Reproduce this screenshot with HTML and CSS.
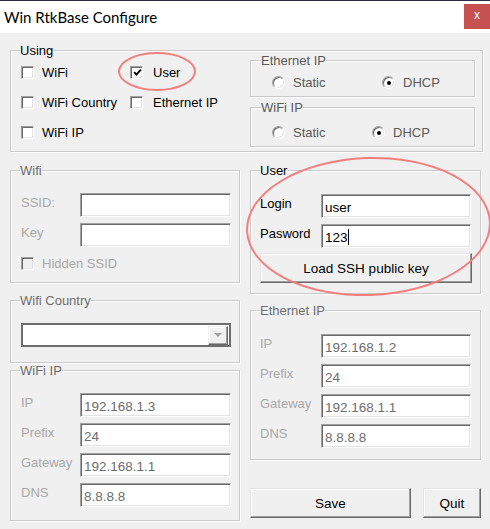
FILE: index.html
```html
<!DOCTYPE html>
<html lang="en">
<head>
<meta charset="utf-8">
<title>Win RtkBase Configure</title>
<link rel="stylesheet" href="styles.css">
</head>
<body>
<div class="window">
  <div class="titlebar">
    <span class="title">Win RtkBase Configure</span>
    <span class="close">x</span>
  </div>

  <div class="client">
    <fieldset class="group using">
      <legend>Using</legend>
      <div class="using-body">
        <div class="checks">
          <label class="chk"><span class="box"></span>WiFi</label>
          <label class="chk col2"><span class="box"><svg class="tick" viewBox="0 0 9 9"><polyline points="1.2,4 3.4,6.6 7.8,1.6"/></svg></span>User</label>
          <label class="chk"><span class="box"></span>WiFi Country</label>
          <label class="chk col2"><span class="box"></span>Ethernet IP</label>
          <label class="chk"><span class="box"></span>WiFi IP</label>
        </div>
        <div class="modes">
          <fieldset class="group sub eth-mode">
            <legend>Ethernet IP</legend>
            <div class="radios wide">
              <span class="rad"><span class="radio"></span>Static</span>
              <span class="rad"><span class="radio on"></span>DHCP</span>
            </div>
          </fieldset>
          <fieldset class="group sub wifi-mode">
            <legend>WiFi IP</legend>
            <div class="radios narrow">
              <span class="rad"><span class="radio"></span>Static</span>
              <span class="rad"><span class="radio on"></span>DHCP</span>
            </div>
          </fieldset>
        </div>
      </div>
    </fieldset>

    <div class="columns">
      <div class="col col-left">
        <fieldset class="group off wifi">
          <legend>Wifi</legend>
          <div class="form left-form">
            <span class="lbl">SSID:</span><div class="field"></div>
            <span class="lbl">Key</span><div class="field"></div>
            <label class="chk hidden-ssid"><span class="box dis"></span>Hidden SSID</label>
          </div>
        </fieldset>

        <fieldset class="group off country">
          <legend>Wifi Country</legend>
          <div class="combo-wrap">
            <div class="combo"><span class="drop"><span class="arrow"></span></span></div>
          </div>
        </fieldset>

        <fieldset class="group off wifi-ip">
          <legend>WiFi IP</legend>
          <div class="form left-form ipform">
            <span class="lbl">IP</span><div class="field">192.168.1.3</div>
            <span class="lbl">Prefix</span><div class="field">24</div>
            <span class="lbl">Gateway</span><div class="field">192.168.1.1</div>
            <span class="lbl">DNS</span><div class="field">8.8.8.8</div>
          </div>
        </fieldset>
      </div>

      <div class="col col-right">
        <fieldset class="group user">
          <legend>User</legend>
          <div class="form right-form">
            <span class="lbl">Login</span><div class="field on">user</div>
            <span class="lbl">Pasword</span><div class="field on">123<span class="caret"></span></div>
            <button class="btn ssh" type="button">Load SSH public key</button>
          </div>
        </fieldset>

        <fieldset class="group off eth-ip">
          <legend>Ethernet IP</legend>
          <div class="form right-form ipform">
            <span class="lbl">IP</span><div class="field">192.168.1.2</div>
            <span class="lbl">Prefix</span><div class="field">24</div>
            <span class="lbl">Gateway</span><div class="field">192.168.1.1</div>
            <span class="lbl">DNS</span><div class="field">8.8.8.8</div>
          </div>
        </fieldset>

        <div class="actions">
          <button class="btn save" type="button">Save</button>
          <button class="btn quit" type="button">Quit</button>
        </div>
      </div>
    </div>
  </div>

  <div class="annot annot-user"></div>
  <div class="annot annot-group"></div>
</div>
</body>
</html>
```

FILE: styles.css
```css
* { box-sizing: border-box; }

html, body {
  margin: 0;
  padding: 0;
}

body {
  width: 490px;
  height: 529px;
  overflow: hidden;
  background: #f0f0f0;
  font-family: "Liberation Sans", Arial, sans-serif;
  font-size: 13px;
  line-height: 15px;
  color: #000;
}

.window {
  position: relative;
  height: 529px;
  border-top: 1px solid #2a2a44;
}

/* ---------- title bar ---------- */
.titlebar {
  height: 32px;
  background: #fff;
  display: flex;
  justify-content: space-between;
  align-items: flex-start;
}

.title {
  font-family: Lato, "Liberation Sans", sans-serif;
  font-size: 15px;
  line-height: 17px;
  margin: 8px 0 0 4px;
  color: #000;
}

.close {
  width: 26px;
  height: 25px;
  margin-top: 3px;
  background: #c75050;
  color: #fff;
  font-size: 12px;
  line-height: 23px;
  text-align: center;
}

/* ---------- client area ---------- */
.client {
  padding-left: 10px;
}

.group {
  margin: 0;
  padding: 0;
  min-width: 0;
  border: 1px solid #c9c9c9;
  box-shadow: inset 1px 1px 0 #fff, 1px 1px 0 #fff;
}

.group > legend {
  padding: 0;
  margin-left: 9px;
  font-size: 13px;
  line-height: 15px;
}

.off > legend { color: #6d6d6d; }
.off .lbl { color: #a8a8a8; }
.off .field { color: #6d6d6d; }

.using {
  width: 473px;
  margin-top: 10px;
}

.using-body {
  display: flex;
  padding: 4px 7px 4px 10px;
}

.checks {
  width: 229px;
  display: grid;
  grid-template-columns: 109px 1fr;
  grid-template-rows: repeat(3, 20px);
  row-gap: 10px;
  align-self: flex-start;
}

.chk {
  display: flex;
  align-items: center;
  gap: 8px;
}

.chk.col2 { gap: 10px; }

.box {
  width: 13px;
  height: 13px;
  flex: none;
  background: #fff;
  border: 1px solid;
  border-color: #a0a0a0 #fff #fff #a0a0a0;
  box-shadow: inset 1px 1px 0 #696969, inset -1px -1px 0 #e3e3e3;
  display: flex;
  align-items: center;
  justify-content: center;
}

.box.dis { background: #f0f0f0; }

.tick {
  width: 9px;
  height: 9px;
  fill: none;
  stroke: #000;
  stroke-width: 1.9;
  margin: 1px 0 0 1px;
}

.modes {
  width: 225px;
  margin-top: -9px;
  display: flex;
  flex-direction: column;
  gap: 3px;
}

.sub > legend {
  margin-left: 10px;
  color: #5a5a5a;
}

.radios {
  display: grid;
  padding: 7px 0 7px 21px;
  color: #5a5a5a;
}

.radios.wide { grid-template-columns: 110px 1fr; }
.radios.narrow { grid-template-columns: 100px 1fr; }
.wifi-mode .radios { padding-top: 10px; }

.rad {
  display: flex;
  align-items: center;
  gap: 8px;
  height: 14px;
}

.radio {
  width: 13px;
  height: 13px;
  flex: none;
  border-radius: 50%;
  background: #fff;
  border: 1px solid;
  border-color: #a0a0a0 #fff #fff #a0a0a0;
  box-shadow: inset 1px 1px 0 #696969, inset -1px -1px 0 #e3e3e3;
  display: flex;
  align-items: center;
  justify-content: center;
}

.radio.on::after {
  content: "";
  width: 4px;
  height: 4px;
  border-radius: 50%;
  background: #000;
  margin: 1px 0 0 1px;
}

/* ---------- lower columns ---------- */
.columns {
  display: flex;
  gap: 10px;
  margin-top: 11px;
}

.col {
  display: flex;
  flex-direction: column;
}

.col-left { width: 230px; }
.col-right { width: 231px; }

.form {
  display: grid;
  row-gap: 6px;
}

.left-form {
  grid-template-columns: 59px 151px;
  padding: 15px 8px 12px 10px;
}

.ipform.left-form { padding-bottom: 13px; }

.right-form {
  grid-template-columns: 61px 151px;
  padding: 16px 8px 10px 9px;
}

.ipform.right-form { padding-bottom: 11px; }

.lbl {
  padding-top: 2px;
  white-space: nowrap;
}

.field {
  height: 24px;
  width: 100%;
  background: #fff;
  border: 1px solid;
  border-color: #a0a0a0 #fff #fff #a0a0a0;
  box-shadow: inset 1px 1px 0 #696969, inset -1px -1px 0 #e3e3e3;
  font-size: 13.5px;
  line-height: 16px;
  padding: 5px 3px 0 3px;
  white-space: nowrap;
  overflow: hidden;
}

.right-form .field { width: 150px; }
.field.on { color: #000; }

.caret {
  display: inline-block;
  width: 1px;
  height: 16px;
  background: #000;
  vertical-align: top;
  margin-top: -1px;
}

.hidden-ssid {
  grid-column: 1 / -1;
  height: 14px;
  margin-top: 3px;
  color: #a8a8a8;
}

.country { margin-top: 10px; }

.combo-wrap {
  padding: 15px 8px 15px 10px;
}

.combo {
  height: 24px;
  background: #fff;
  border: 2px solid #6d6d6d;
  display: flex;
  justify-content: flex-end;
  align-items: center;
  padding-right: 1px;
}

.drop {
  width: 20px;
  height: 19px;
  background: #f0f0f0;
  border: 1px solid;
  border-color: #f0f0f0 #696969 #696969 #f0f0f0;
  box-shadow: inset -1px -1px 0 #a0a0a0, inset 1px 1px 0 #fff;
  display: flex;
  align-items: center;
  justify-content: center;
}

.arrow {
  width: 0;
  height: 0;
  border-left: 4px solid transparent;
  border-right: 4px solid transparent;
  border-top: 4px solid #a0a0a0;
}

.user > legend { color: #000; }
.eth-ip { margin-top: 9px; }

.btn {
  font-family: "Liberation Sans", Arial, sans-serif;
  font-size: 13.5px;
  color: #000;
  height: 30px;
  padding: 0;
  background: #f0f0f0;
  border: 1px solid;
  border-color: #e3e3e3 #696969 #696969 #e3e3e3;
  box-shadow: inset -1px -1px 0 #a0a0a0, inset 1px 1px 0 #fff;
  border-radius: 0;
}

.ssh {
  grid-column: 1 / -1;
  width: 212px;
  margin-top: -1px;
}

.actions {
  display: flex;
  gap: 12px;
  margin-top: 28px;
}

.save { width: 161px; }
.quit { width: 58px; }

/* ---------- annotation ellipses (overlay) ---------- */
.annot {
  position: absolute;
  border: 2px solid #f47e7e;
  border-radius: 50%;
  pointer-events: none;
}

.annot-user {
  left: 118px;
  top: 51px;
  width: 78px;
  height: 39px;
}

.annot-group {
  left: 246px;
  top: 156px;
  width: 245px;
  height: 139px;
  transform: rotate(-2deg);
}
```
